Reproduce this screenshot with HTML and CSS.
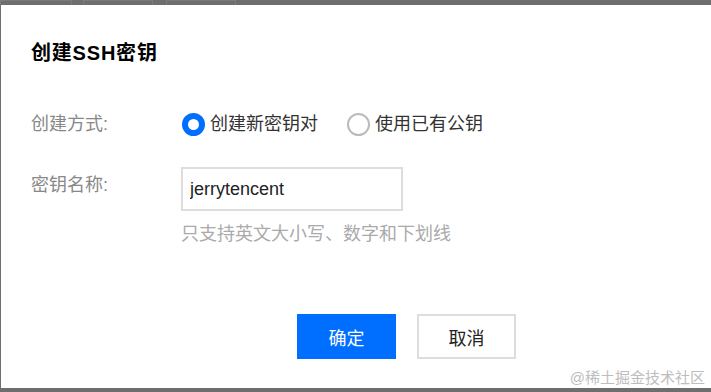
FILE: index.html
```html
<!DOCTYPE html>
<html lang="zh-CN">
<head>
  <meta charset="UTF-8" />
  <meta name="viewport" content="width=device-width, initial-scale=1.0" />
  <title>创建SSH密钥</title>
  <link rel="stylesheet" href="styles.css">
</head>
<body>
  <div class="tabs">
    <div class="tab tab-1"></div>
    <div class="tab tab-2"></div>
    <div class="tab tab-3"></div>
  </div>

  <div class="dialog">
    <h3 class="title">创建SSH密钥</h3>

    <div class="row row-type">
      <label class="label">创建方式:</label>
      <div class="radios">
        <span class="radio checked"><i class="dot"></i>创建新密钥对</span>
        <span class="radio"><i class="dot"></i>使用已有公钥</span>
      </div>
    </div>

    <div class="row row-name">
      <label class="label">密钥名称:</label>
      <div class="field">
        <input type="text" class="input" value="jerrytencent" />
        <p class="hint">只支持英文大小写、数字和下划线</p>
      </div>
    </div>

    <div class="actions">
      <button class="button primary">确定</button>
      <button class="button">取消</button>
    </div>

    <div class="watermark">@稀土掘金技术社区</div>
  </div>

  <div class="bottom"></div>
</body>
</html>
```

FILE: styles.css
```css
:root {
  --primary-color: #006eff;
  --mask-color: #6e6e6e;
}
body {
  font-family: "Liberation Sans", "Noto Sans CJK SC", sans-serif;
  margin: 0;
  padding: 0;
  background: var(--mask-color);
  color: #222;
  overflow: hidden;
}
.tabs {
  display: flex;
  height: 5px;
}
.tab {
  border: 1px solid #7b7b7b;
  border-bottom: none;
  box-sizing: border-box;
  height: 5px;
}
.tab-1 { width: 72px; }
.tab-2 { width: 70px; margin-left: 11px; }
.tab-3 { width: 70px; margin-left: 13px; }

.dialog {
  position: relative;
  background: #fff;
  height: 383px;
  margin-left: 1px;
  padding: 36px 0 0 30px;
  box-sizing: border-box;
}
.title {
  margin: 0;
  font-size: 20px;
  line-height: 24px;
  font-weight: bold;
  letter-spacing: 0.8px;
  color: #000;
}
.row {
  display: flex;
  font-size: 18px;
  line-height: 24px;
}
.label {
  width: 150px;
  flex: none;
  color: #888;
}
.row-type { margin-top: 47px; }
.radios { display: flex; gap: 28px; }
.radio {
  display: flex;
  align-items: center;
  color: #333;
}
.dot {
  width: 23px;
  height: 23px;
  border-radius: 50%;
  border: 2px solid #bbb;
  box-sizing: border-box;
  margin: 0 5px 0 1px;
}
.radio.checked .dot { border: 6px solid var(--primary-color); }

.row-name { margin-top: 31px; }
.row-name .label { padding-top: 6px; }
.input {
  width: 222px;
  height: 44px;
  box-sizing: border-box;
  border: 2px solid #ddd;
  padding: 0 7px;
  font-family: inherit;
  font-size: 18px;
  color: #222;
  outline: none;
}
.hint {
  margin: 11px 0 0;
  color: #aaa;
}

.actions {
  display: flex;
  gap: 21px;
  margin: 68px 0 0 266px;
}
.button {
  width: 99px;
  height: 45px;
  box-sizing: border-box;
  border: 2px solid #ddd;
  background: #fff;
  color: #222;
  font-family: inherit;
  font-size: 18px;
  padding: 0;
}
.button.primary {
  background: var(--primary-color);
  border-color: var(--primary-color);
  color: #fff;
}
.watermark {
  position: absolute;
  right: 6px;
  bottom: 1px;
  font-size: 15px;
  line-height: 18px;
  color: #bdbdbd;
}
.bottom { height: 4px; }
```
